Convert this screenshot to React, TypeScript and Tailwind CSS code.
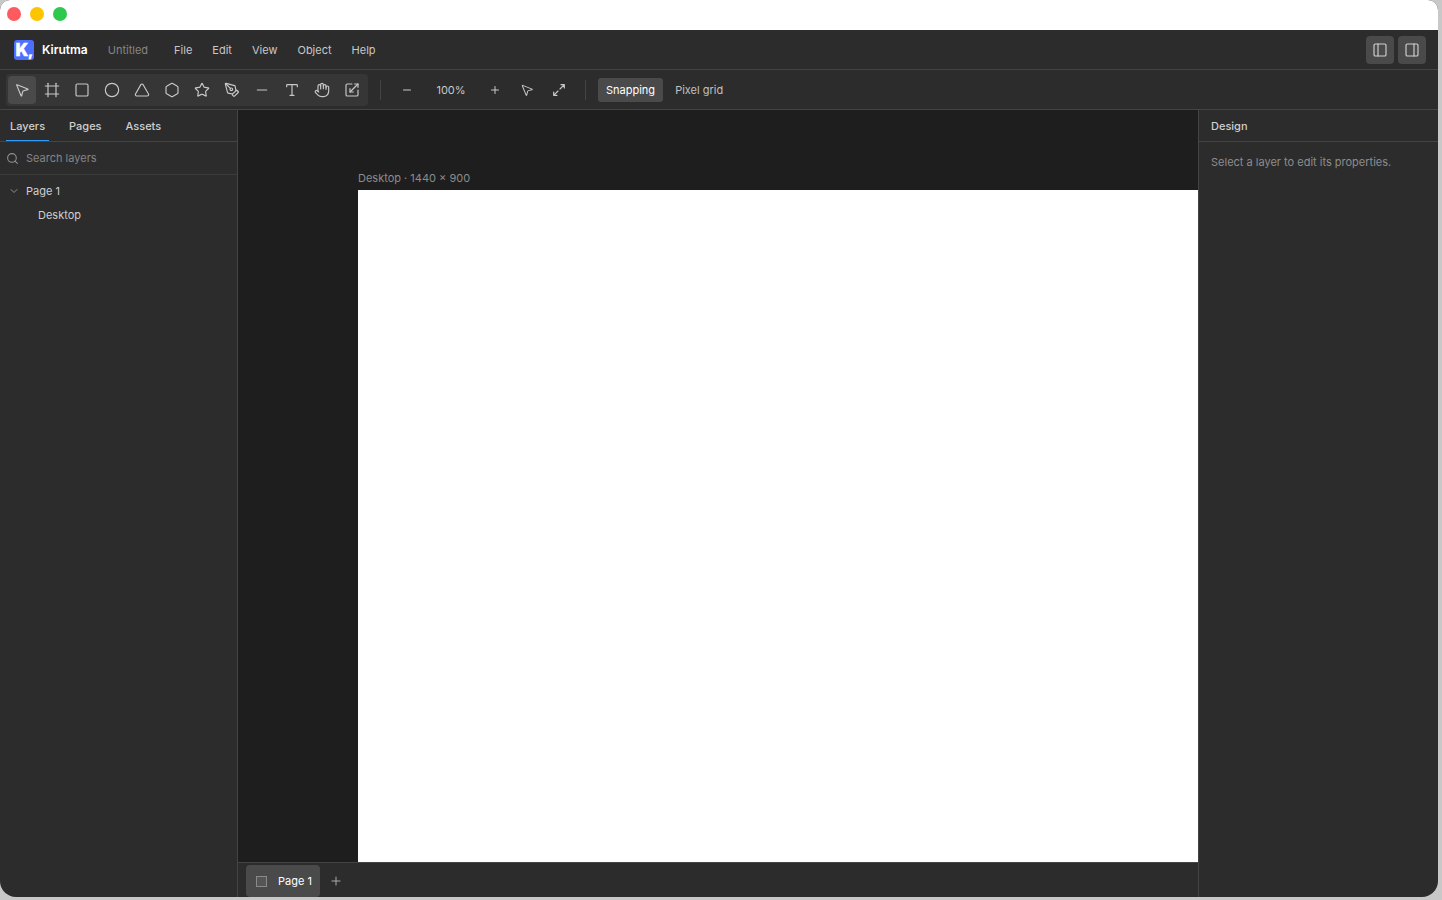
import type { ReactNode } from "react"
import {
  ChevronDown,
  Circle,
  Frame,
  Hand,
  Hexagon,
  Minus,
  MousePointer2,
  PanelLeft,
  PanelRight,
  PenTool,
  Plus,
  Scaling,
  Search,
  Square,
  Star,
  Triangle,
  Type,
} from "lucide-react"

const menus = ["File", "Edit", "View", "Object", "Help"]

const tools = [
  { label: "Move", icon: MousePointer2 },
  { label: "Frame", icon: Frame },
  { label: "Rectangle", icon: Square },
  { label: "Ellipse", icon: Circle },
  { label: "Triangle", icon: Triangle },
  { label: "Polygon", icon: Hexagon },
  { label: "Star", icon: Star },
  { label: "Pen", icon: PenTool },
  { label: "Line", icon: Minus },
  { label: "Text", icon: Type },
  { label: "Hand", icon: Hand },
  { label: "Scale", icon: Scaling },
]

function FitIcon() {
  return (
    <svg
      className="h-4 w-4"
      viewBox="0 0 24 24"
      fill="none"
      stroke="currentColor"
      strokeWidth="1.75"
      strokeLinecap="round"
      strokeLinejoin="round"
    >
      <path d="M15 4h5v5M20 4l-6.500 6.500M9 20H4v-5M4 20l6.500-6.500" />
    </svg>
  )
}

interface IconButtonProps {
  label: string
  active?: boolean
  children: ReactNode
}

function IconButton({ label, active, children }: IconButtonProps) {
  return (
    <button
      aria-label={label}
      className={`flex h-7 w-7 items-center justify-center rounded ${active ? "bg-[#4a4a4a]" : ""}`}
    >
      {children}
    </button>
  )
}

function TitleBar() {
  return (
    <div className="flex h-[30px] shrink-0 items-start gap-[9px] bg-white px-[7px] pt-[7px]">
      <button aria-label="Close" className="h-[14px] w-[14px] rounded-full bg-[#ff5a60]" />
      <button aria-label="Minimize" className="h-[14px] w-[14px] rounded-full bg-[#fdc400]" />
      <button aria-label="Zoom" className="h-[14px] w-[14px] rounded-full bg-[#2dc84d]" />
    </div>
  )
}

function MenuBar() {
  return (
    <header className="flex h-10 shrink-0 items-center border-b border-[#444] pr-3 pl-[14px]">
      <svg className="h-5 w-5" viewBox="0 0 20 20" aria-hidden="true">
        <rect width="20" height="20" rx="3" fill="#4c6fff" />
        <text x="1.5" y="16" fill="#fff" stroke="#fff" strokeWidth="0.3" fontSize="17" fontWeight="900">
          K
        </text>
        <text x="14" y="16" fill="#fff" stroke="#fff" strokeWidth="0.3" fontSize="14" fontWeight="900">
          ,
        </text>
      </svg>
      <span className="ml-2 text-[12px] leading-4 font-semibold text-white">Kirutma</span>
      <span className="ml-5 text-[#858585]">Untitled</span>
      <nav className="ml-4 flex">
        {menus.map((menu) => (
          <button key={menu} className="mx-[2px] h-7 rounded px-2 text-[#c8c8c8]">
            {menu}
          </button>
        ))}
      </nav>
      <div className="ml-auto flex gap-1">
        <IconButton label="Toggle left panel" active>
          <PanelLeft size={16} strokeWidth={1.75} />
        </IconButton>
        <IconButton label="Toggle right panel" active>
          <PanelRight size={16} strokeWidth={1.75} />
        </IconButton>
      </div>
    </header>
  )
}

function Toolbar() {
  return (
    <div className="flex h-10 shrink-0 items-center border-b border-[#444] px-[6px] text-[#c8c8c8]">
      <div className="flex h-8 items-center gap-[2px] rounded bg-[#363636] px-[2px]">
        {tools.map(({ label, icon: Icon }, i) => (
          <IconButton key={label} label={label} active={i === 0}>
            <Icon size={16} strokeWidth={1.75} />
          </IconButton>
        ))}
      </div>
      <div className="mx-3 h-5 w-px bg-[#444]" />
      <div className="flex items-center gap-1">
        <IconButton label="Zoom out">
          <Minus size={12} strokeWidth={2} />
        </IconButton>
        <button className="h-7 w-[52px] text-center">100%</button>
        <IconButton label="Zoom in">
          <Plus size={12} strokeWidth={2} />
        </IconButton>
        <IconButton label="Zoom to selection">
          <MousePointer2 size={14} strokeWidth={1.75} />
        </IconButton>
        <IconButton label="Zoom to fit">
          <FitIcon />
        </IconButton>
      </div>
      <div className="mx-3 h-5 w-px bg-[#444]" />
      <div className="flex items-center gap-1">
        <button className="h-6 rounded-[3px] bg-[#4a4a4a] px-2 text-white">Snapping</button>
        <button className="h-6 rounded-[3px] px-2 text-[#c0c0c0]">Pixel grid</button>
      </div>
    </div>
  )
}

function LayersPanel() {
  return (
    <aside className="w-[238px] shrink-0 border-r border-[#444]">
      <div className="flex h-8 gap-4 border-b border-[#444] px-[6px] font-medium">
        <button className="border-b border-[#2f9bff] px-1 pt-px">Layers</button>
        <button className="px-1">Pages</button>
        <button className="px-1">Assets</button>
      </div>
      <label className="flex h-[33px] items-center gap-[7px] border-b border-[#3c3c3c] px-[6px] text-[#909090]">
        <Search size={13} strokeWidth={2} />
        <input
          aria-label="Search layers"
          placeholder="Search layers"
          className="min-w-0 flex-1 bg-transparent outline-none placeholder:text-[#858585]"
        />
      </label>
      <ul className="pt-1">
        <li>
          <button className="flex h-6 w-full items-center gap-[6px] pl-2">
            <ChevronDown size={12} strokeWidth={2} className="text-[#909090]" />
            Page 1
          </button>
          <ul>
            <li>
              <button className="flex h-6 w-full items-center pl-[38px]">Desktop</button>
            </li>
          </ul>
        </li>
      </ul>
    </aside>
  )
}

function Canvas() {
  return (
    <main className="flex min-w-0 flex-1 flex-col">
      <div className="flex min-h-0 flex-1 flex-col bg-[#1e1e1e] pt-[60px] pl-[120px]">
        <div className="h-5 text-[#8c8c8c]">Desktop · 1440 × 900</div>
        <div className="flex-1 bg-white" />
      </div>
      <div className="flex h-[35px] shrink-0 items-end border-t border-[#444] pl-2">
        <button className="flex h-8 items-center gap-[11px] rounded bg-[#4a4a4a] pr-2 pl-[10px] text-white">
          <span className="h-[11px] w-[11px] border border-[#8a8a8a] bg-[#555]" />
          Page 1
        </button>
        <button aria-label="Add page" className="flex h-8 w-8 items-center justify-center text-[#aaa]">
          <Plus size={14} strokeWidth={1.75} />
        </button>
      </div>
    </main>
  )
}

function DesignPanel() {
  return (
    <aside className="w-60 shrink-0 border-l border-[#444]">
      <h2 className="flex h-8 items-center border-b border-[#444] px-3 font-medium">Design</h2>
      <p className="p-3 text-[#8c8c8c]">Select a layer to edit its properties.</p>
    </aside>
  )
}

export default function App() {
  return (
    <div className="h-screen bg-[#c9c8c9] pr-1 pb-[3px] font-['Inter',sans-serif] text-[11px] leading-4 text-[#cfcfcf]">
      <div className="flex h-full flex-col overflow-hidden rounded-t-[10px] rounded-b-2xl bg-[#2c2c2c]">
        <TitleBar />
        <MenuBar />
        <Toolbar />
        <div className="flex min-h-0 flex-1">
          <LayersPanel />
          <Canvas />
          <DesignPanel />
        </div>
      </div>
    </div>
  )
}
